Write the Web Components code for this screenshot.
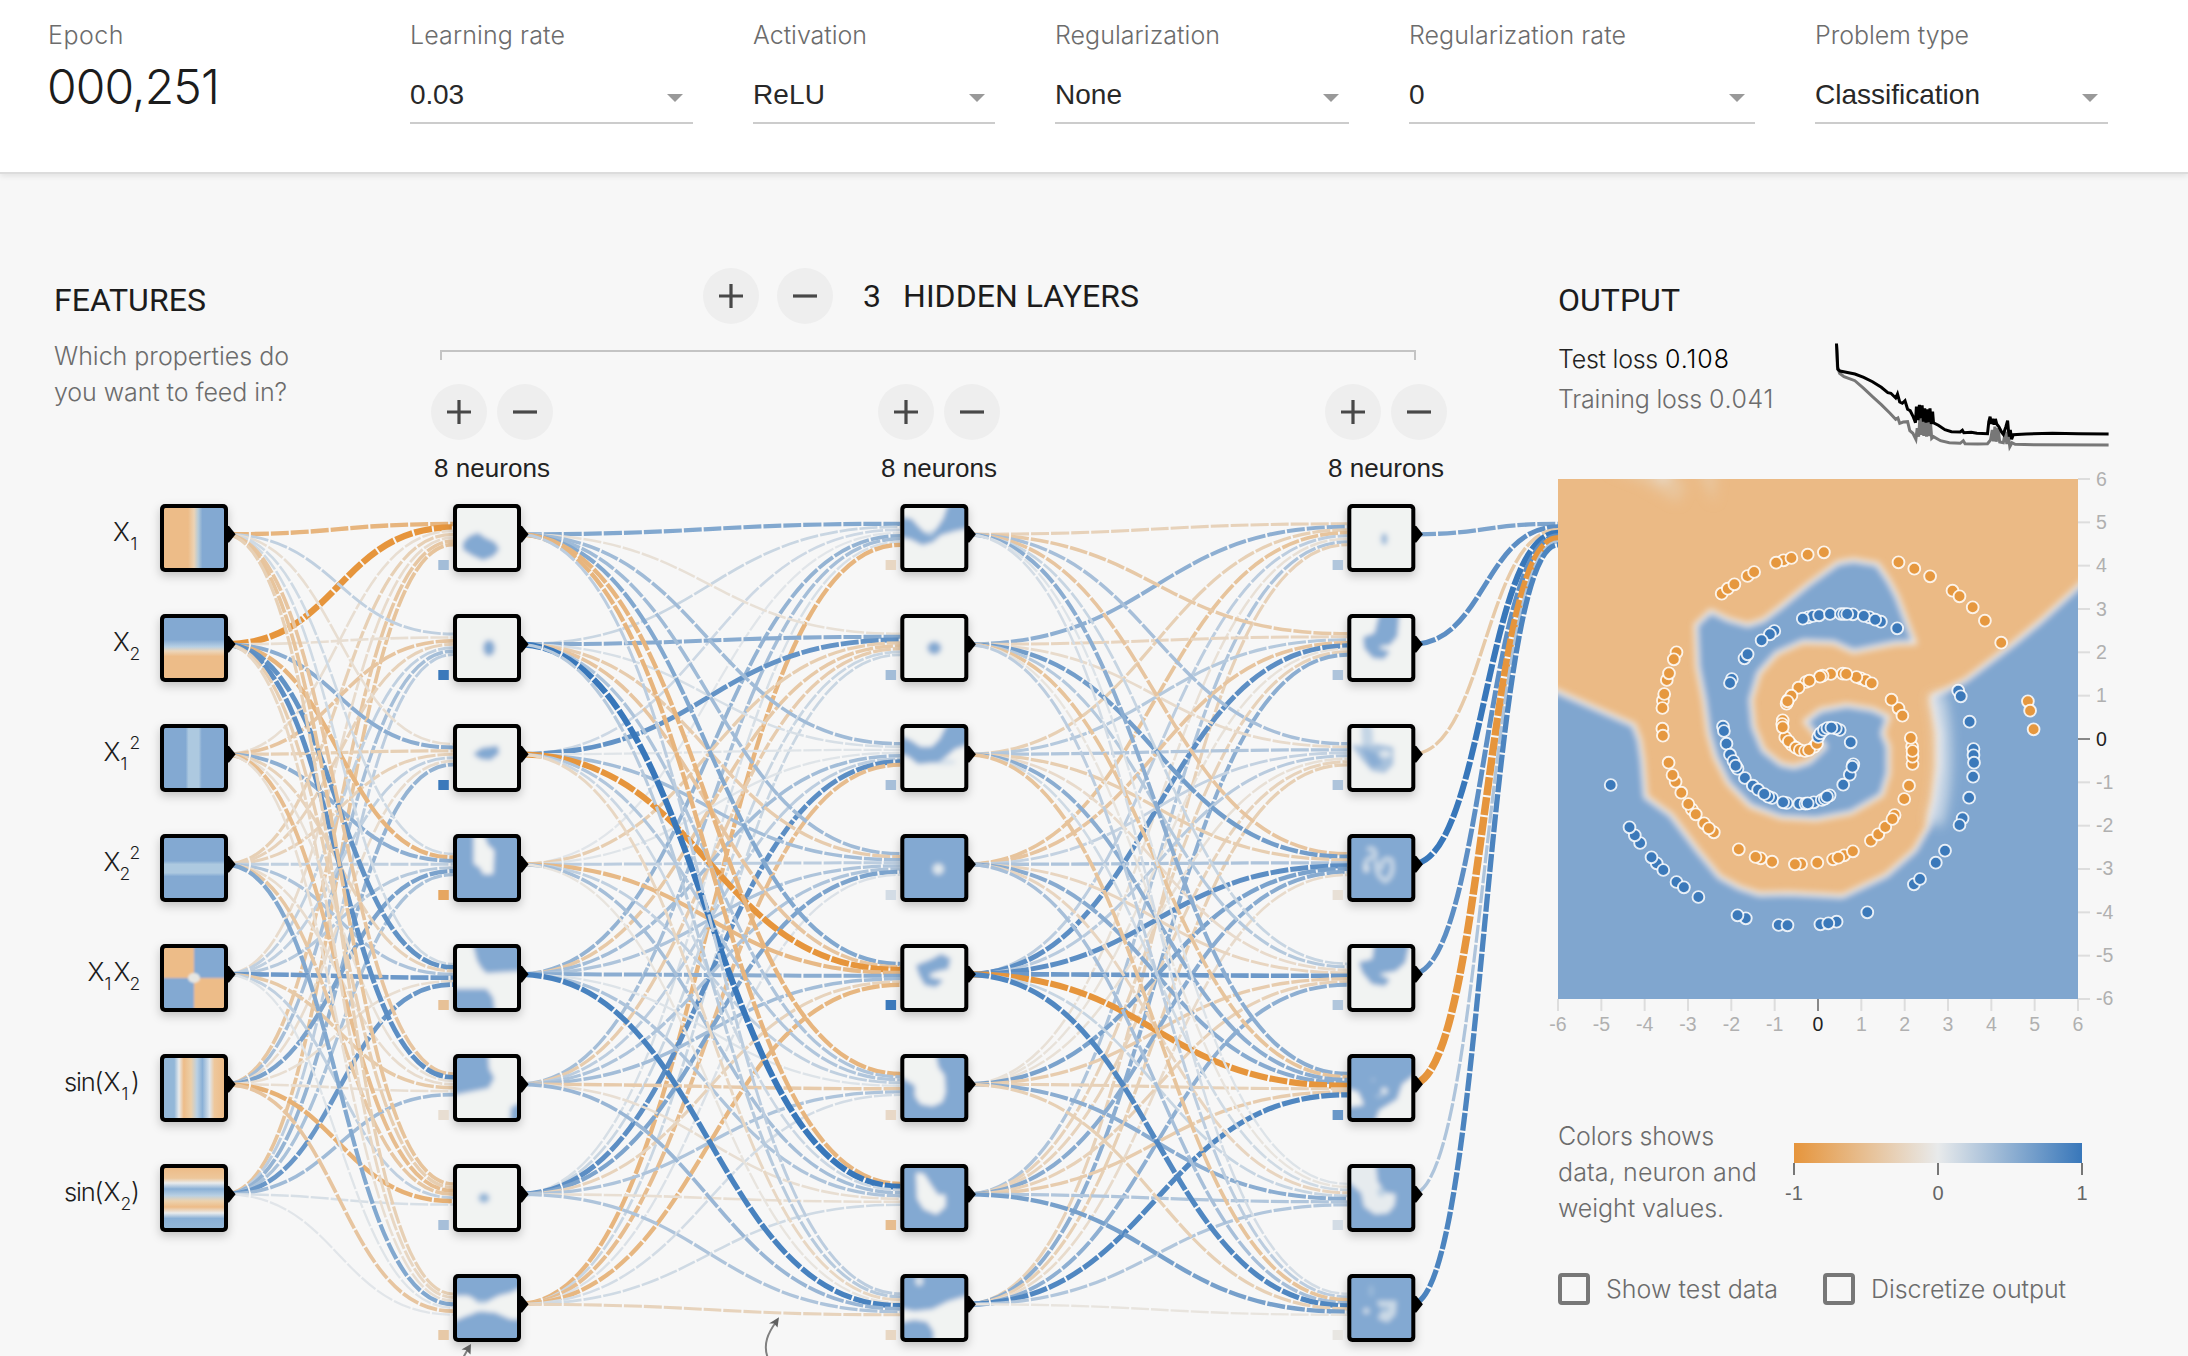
<!DOCTYPE html>
<html lang="en">
<head>
<meta charset="utf-8">
<title>Neural network playground</title>
<style>
html,body{margin:0;height:100%;overflow:hidden}
body{background:#f7f7f7;font-family:Inter,"Liberation Sans",sans-serif;font-weight:300;color:#222}
</style>
</head>
<body>
<play-ground></play-ground>
<script>
const define = (name, html, setup) => customElements.define(name, class extends HTMLElement {
  connectedCallback() {
    if (this.shadowRoot) return;
    this.attachShadow({mode: 'open'}).innerHTML = typeof html === 'function' ? html(this) : html;
    if (setup) setup(this);
  }
});

/* Text spread evenly over a given width */
define('fit-text', el => `<style>:host{display:block;white-space:pre}span{display:inline-block}</style><span>${el.getAttribute('text')}</span>`, el => {
  const s = el.shadowRoot.querySelector('span'), w = +el.getAttribute('w'), n = el.getAttribute('text').length;
  const d = (w - s.getBoundingClientRect().width) / n;
  s.style.letterSpacing = d.toFixed(3) + 'px';
});

define('round-button', el => `<style>
  :host{display:block;width:56px;height:56px;border-radius:50%;background:#eee}
  svg{display:block}
</style><svg width="56" height="56"><path d="M16 28H40${el.hasAttribute('minus') ? '' : 'M28 16V40'}" stroke="#484848" stroke-width="3.2" fill="none"/></svg>`);

define('select-field', el => `<style>
  :host{display:block}
  .l{font-size:25px;line-height:36px;color:#6c6c6c}
  .v{margin-top:24px;padding-bottom:9px;border-bottom:2px solid #ccc;display:flex;justify-content:space-between;align-items:center;
     font:400 28px/36px "Liberation Sans",sans-serif;color:#282828}
  i{width:0;height:0;border:8px solid transparent;border-top-color:#999;border-bottom:0;margin:5px 10px 0 0}
</style><fit-text class="l" text="${el.getAttribute('label')}" w="${el.getAttribute('lw')}"></fit-text>
<div class="v"><fit-text text="${el.getAttribute('value')}" w="${el.getAttribute('vw')}"></fit-text><i></i></div>`);

define('top-controls', `<style>
  :host{display:flex;gap:60px;height:155px;padding:17px 0 0 48px;background:#fff;border-bottom:2px solid #dcdcdc;box-shadow:0 2px 6px rgba(0,0,0,.09);position:relative}
  .e{width:302px}
  .l{font-size:25px;line-height:36px;color:#6c6c6c}
  .n{font-size:48px;line-height:56px;margin:6px 0 0 -1px;color:#1c1c1c}
</style>
<div class="e"><fit-text class="l" text="Epoch" w="76"></fit-text><fit-text class="n" text="000,251" w="172"></fit-text></div>
<select-field style="width:283px" label="Learning rate" lw="155" value="0.03" vw="54"></select-field>
<select-field style="width:242px" label="Activation" lw="114" value="ReLU" vw="72"></select-field>
<select-field style="width:294px" label="Regularization" lw="165" value="None" vw="67"></select-field>
<select-field style="width:346px" label="Regularization rate" lw="217" value="0" vw="15.5"></select-field>
<select-field style="width:293px" label="Problem type" lw="154" value="Classification" vw="165"></select-field>`);

define('layer-controls', `<style>
  :host{display:block;width:122px}
  div{display:flex;justify-content:space-between}
  fit-text{font:400 26px/36px "Liberation Sans",sans-serif;margin:10px 0 0 3px;color:#222}
</style><div><round-button></round-button><round-button minus></round-button></div><fit-text text="8 neurons" w="116"></fit-text>`);

define('features-intro', `<style>
  :host{display:block;padding:106px 0 0 54px;width:431px;flex:none;box-sizing:border-box}
  .h{font:400 32px/40px Roboto,sans-serif;color:#1c1c1c}
  .p{font-size:25px;line-height:36px;color:#6c6c6c}
</style><fit-text class="h" text="FEATURES" w="152"></fit-text>
<fit-text class="p" style="margin-top:18px" text="Which properties do" w="235"></fit-text>
<fit-text class="p" text="you want to feed in?" w="233"></fit-text>`);

define('hidden-layers', `<style>
  :host{display:block;padding-top:94px;width:1016px;flex:none}
  .t{display:flex;align-items:center;padding-left:272px}
  .t round-button+round-button{margin-left:18px}
  .h{font:400 32px/40px Roboto,sans-serif;color:#1c1c1c}
  .b{width:972px;height:8px;border:2px solid #c4c4c4;border-bottom:0;margin:26px 0 0 9px}
  .c{display:flex;justify-content:space-between;margin-top:24px}
</style>
<div class="t"><round-button></round-button><round-button minus></round-button>
<fit-text class="h" style="margin-left:30px" text="3" w="18"></fit-text><fit-text class="h" style="margin-left:22px" text="HIDDEN LAYERS" w="236"></fit-text></div>
<div class="b"></div>
<div class="c"><layer-controls></layer-controls><layer-controls></layer-controls><layer-controls></layer-controls></div>`);

/* Diverging colour scale for weights in [-1, 1] */
const NEG = [230,149,60], MID = [232,234,235], POS = [56,119,186];
const boost = w => Math.pow(Math.abs(w), .92);
const tone = w => {
  const t = Math.min(1, boost(w)), e = w < 0 ? NEG : POS;
  return `rgb(${MID.map((m, i) => Math.round(m + (e[i] - m) * t)).join()})`;
};

/* weights[layer][target][source] */
const W = [[
  [-.6,-1.25,-.12,-.28,-.15,-.38,-.42],
  [.2,-.12,-.4,-.25,.2,.35,.22],
  [-.12,.5,-.28,-.25,.2,-.14,.45],
  [.12,-.6,.48,.2,.25,.6,.32],
  [.12,.75,-.25,.3,.68,-.12,.7],
  [-.4,.78,-.1,-.14,-.35,-.12,.38],
  [-.42,-.3,-.5,-.38,.2,-.65,.08],
  [-.28,-.2,-.12,.55,.04,-.4,.03]],
 [[.55,.15,.13,.03,.45,.35,.08,-.6],
  [-.1,.52,.74,-.3,-.36,-.32,.15,.15],
  [.38,.08,.04,.04,.36,.22,.78,-.5],
  [.38,-.32,.36,.22,.3,.3,.58,.06],
  [.55,-.4,-1.1,-.55,.5,.36,-.24,-.58],
  [-.6,.3,.28,.2,.05,-.34,.3,.1],
  [-.6,1.1,.14,.35,.3,-.12,-.12,.12],
  [.22,.25,-.2,-.06,.9,.42,.3,-.24]],
 [[-.25,.48,-.28,-.42,.22,-.1,.3,-.26],
  [-.36,-.22,.26,-.4,.78,-.08,-.25,.5],
  [.34,-.15,.28,.18,.24,-.1,-.24,-.28],
  [-.4,.65,-.3,.3,.78,.6,.52,-.15],
  [.16,.26,-.16,-.22,.68,-.32,-.26,.48],
  [.5,-.42,.5,.52,-1.15,-.26,-.32,.85],
  [.05,-.06,.12,-.22,.16,.5,.28,.28],
  [.1,.22,-.42,.34,.85,-.28,.62,-.06]],
 [[.58,.78,-.35,1.1,.78,-1.55,.3,.88]]];

const COLX = [160, 453, 900.3, 1347.3], top0 = 504, pitch = 110;
const BIAS = [[], [.36,.98,.98,-.78,-.45,-.12,.34,-.36], [-.2,.36,.34,.1,.98,-.18,-.5,-.2], [.28,.3,.3,-.1,.28,.7,.1,-.04]];
const B = '#83a9d2', N = '#f1f3f2', O = '#edbc88';
const blob = (pts, fill, o = 1) => `<polygon points="${pts}" fill="${fill}" stroke="${fill}" stroke-width="2.5" stroke-linejoin="round" opacity="${o}"/>`;
const ell = (x, y, a, b, f, o = 1) => `<ellipse cx="${x}" cy="${y}" rx="${a}" ry="${b}" fill="${f}" opacity="${o}"/>`;
const bg = f => `<rect x="-9" y="-9" width="78" height="78" fill="${f}"/>`;
const stripes = (id, list, vert) => `<linearGradient id="${id}" x2="${vert ? 0 : 1}" y2="${vert ? 1 : 0}">${list.map(([o, c]) => `<stop offset="${o}" stop-color="${c}"/>`).join('')}</linearGradient><rect width="60" height="60" fill="url(#${id})"/>`;

const ART = [[
  stripes('g0', [[.4,O],[.5,'#ecd3b4'],[.57,'#b5cbd9'],[.64,B]]),
  stripes('g1', [[.36,B],[.48,'#b8d0e4'],[.55,'#ecd6bb'],[.64,O]], 1),
  stripes('g2', [[.36,B],[.41,'#adc9e0'],[.58,'#adc9e0'],[.63,B]]),
  stripes('g3', [[.38,B],[.44,'#adc9e0'],[.58,'#adc9e0'],[.64,B]], 1),
  `<g filter="url(#soft1)">${bg(B)}<rect x="-9" y="-9" width="39" height="39" fill="${O}"/><rect x="30" y="30" width="39" height="39" fill="${O}"/>${ell(30,30,6,5,'#e6e6e2')}</g>`,
  stripes('g5', [[0,'#93b7d8'],[.17,'#93b7d8'],[.25,'#e9ebec'],[.33,O],[.45,'#eccfa8'],[.55,'#b9d0e3'],[.64,'#8ab0d6'],[.76,'#dfe6ec'],[.84,'#eec79b'],[1,O]]),
  stripes('g6', [[0,O],[.17,'#edc79b'],[.25,'#e9ebec'],[.35,'#8ab0d6'],[.46,'#b9d0e3'],[.55,'#ecd2ae'],[.65,O],[.75,'#e9ebec'],[.84,'#8ab0d6'],[1,'#93b7d8']], 1)
],[
  bg(N)+blob('7,35 13,29 21,26 28,31 37,35 41,41 36,47 26,51 15,46 7,41',B),
  bg(N)+ell(32,30,6,8,B),
  bg(N)+blob('18,26 25,21 40,19 41,25 33,31 24,30',B),
  bg(B)+blob('18,-2 26,-2 30,8 36,13 35,35 27,35 24,29 18,25',N),
  bg(N)+blob('17,-4 21,12 25,19 30,24 44,23 64,22 64,-4',B)+blob('-4,42 29,42 35,50 37,64 -4,64',B),
  bg(N)+blob('-4,-4 30,-4 31,11 36,20 31,29 -4,36',B)+blob('55,50 64,46 64,64 54,64',B),
  bg(N)+ell(27,30,5.5,5,B,.85),
  bg(B)+blob('-4,19 11,19 20,24 32,24 42,19 54,16 64,11 64,40 54,40 38,33 20,33 8,37 -4,42',N)+ell(25,36,9,3,B,.7)+ell(25,23,7,3,B,.5)
],[
  bg(N)+blob('-4,10 7,12 14,20 20,26 32,23 40,11 45,-4 64,-4 64,19 50,22 36,26 28,33 18,36 6,30 -4,28',B)+ell(26,23,4,5,N,.5),
  bg(N)+ell(30,30,7,6.5,B),
  bg(N)+blob('-4,9 7,14 16,20 28,20 36,12 44,-4 64,-4 64,15 50,20 42,27 34,33 14,35 4,27 -4,25',B)+ell(40,34,12,3,B,.25),
  bg(B)+ell(34,31,5.5,5.5,N,.85),
  bg(N)+blob('13,18 26,13 37,7 45,11 43,20 33,22 25,25 24,30 37,33 31,38 21,36 16,27',B),
  bg(B)+blob('-4,-4 30,-4 33,10 39,18 40,34 37,43 28,47 17,45 12,38 12,27 -4,17',N),
  bg(B)+blob('13,6 19,7 26,18 33,28 40,28 40,38 32,45 20,40 14,30',N),
  bg(N)+blob('-4,-4 64,-4 64,16 44,22 28,30 10,32 -4,29',B)+blob('-4,46 10,43 22,45 28,54 28,64 -4,64',B)+ell(15,3,4,5,N,.8)
],[
  bg(N)+ell(33,31,3.5,6,B,.75),
  bg(N)+blob('29,-4 47,-4 45,18 38,26 29,27 26,31 37,34 32,40 22,39 14,30 13,20 24,16',B),
  bg(N)+blob('11,-4 20,0 21,14 12,18',B,.4)+blob('2,18 12,19 26,17 41,20 41,36 33,44 21,42 12,32',B,.65)+blob('12,22 24,26 30,36 20,38',B,.8)+ell(34,26,6,3.5,N,.75),
  bg(B)+`<path d="M16 12Q24 8 24 18Q10 22 16 32M25 22Q24 38 34 43Q44 36 40 22Q30 18 30 32" fill="none" stroke="${N}" stroke-width="4.5" opacity=".62"/>${ell(15,31,3,4,N,.6)}`,
  bg(N)+blob('24,-4 57,-4 53,14 44,22 32,24 24,26 37,32 33,37 21,35 12,24 9,15 22,12',B),
  bg(B)+blob('-4,32 6,35 11,46 -4,48',N)+blob('64,18 52,27 47,42 29,53 25,64 64,64',N)+ell(33,33,3.5,3.5,N,.8)+ell(22,22,2,2,N,.3)+ell(28,38,4,1.5,N,.4),
  bg(B)+blob('-4,-4 23,-4 25,14 34,26 43,27 42,37 36,44 24,45 14,38 11,24 -4,11',N,.9)+ell(30,24,4,5,B,.4),
  bg(B)+blob('27,24 44,24 43,36 36,43 28,40 32,32',N,.65)+ell(15,33,3,3,N,.7)+ell(20,13,3,6,N,.2)+ell(33,31,5,2.5,B,.7)
]];

define('network-graph', el => {
  let s = '';
  W.forEach((layer, l) => layer.forEach((ws, t) => ws.forEach((w, i) => {
    const x0 = COLX[l] + 64, y0 = top0 + 30.3 + pitch * i;
    const x1 = l === 3 ? 1558 : COLX[l + 1], y1 = top0 + 30.3 + pitch * t + (i - (ws.length - 1) / 2) / ws.length * 24;
    const m = (x0 + x1) / 2;
    s += `<path d="M${x0} ${y0}C${m} ${y0} ${m} ${y1} ${x1} ${y1}" stroke="${tone(w)}" stroke-width="${(2.1 + 3.6 * boost(w)).toFixed(2)}"/>`;
  })));
  let n = '';
  ART.forEach((col, l) => col.forEach((art, i) => {
    const x = COLX[l], y = top0 + pitch * i;
    n += `<g transform="translate(${x} ${y})"><path d="M67 21.8L69 22L75.6 30.3L69 38.4L67 38.6Z"/><rect width="68" height="68" rx="5" filter="url(#drop)"/>
      <g transform="translate(4 4)" clip-path="url(#inner)"><g ${l ? 'filter="url(#soft)"' : ''}>${art}</g></g></g>`;
    if (l) n += `<rect x="${x - 14.7}" y="${y + 56}" width="10.5" height="10" fill="${tone(BIAS[l][i])}"/>`;
  }));
  const T = (x, y, t, c = '') => `<text x="${x}" y="${y}" class="${c}">${t}</text>`;
  const r = i => 541 + pitch * i;
  const labels = T(113,r(0),'X')+T(130.5,r(0)+8.5,'1','s')+T(113,r(1),'X')+T(129.5,r(1)+8.5,'2','s')
    +[2,3].map(i => T(103.5,r(i),'X')+T(i === 2 ? 120.5 : 119.5,r(i)+8.5,i-1,'s')+T(129.5,r(i)-12.5,'2','s')).join('')
    +T(87.5,r(4),'X')+T(104.5,r(4)+8.5,'1','s')+T(113.5,r(4),'X')+T(129.5,r(4)+8.5,'2','s')
    +[5,6].map(i => `<text x="64" y="${r(i)}" textLength="39.5">sin(</text>`+T(103.5,r(i),'X')+T(i === 5 ? 121.5 : 120.5,r(i)+8.5,i-4,'s')+T(131,r(i),')')).join('');
  return `<style>
    :host{display:block}svg{display:block}
    text{font:300 25.5px Inter,"Liberation Sans",sans-serif;fill:#1c1c1c}
    .s{font-size:17.5px}
    .links path{fill:none;stroke-dasharray:18 2;stroke-dashoffset:-6.67}
  </style><svg width="1558" height="866" viewBox="0 490 1558 866">
  <defs><clipPath id="inner"><rect width="60" height="60" rx="1.5"/></clipPath>
  <filter id="soft" x="-20" y="-20" width="100" height="100" filterUnits="userSpaceOnUse"><feGaussianBlur stdDeviation="2.4"/></filter>
  <filter id="soft1" x="-20" y="-20" width="100" height="100" filterUnits="userSpaceOnUse"><feGaussianBlur stdDeviation="1.2"/></filter>
  <filter id="drop" x="-30%" y="-30%" width="160%" height="170%"><feDropShadow dx="0" dy="4" stdDeviation="5" flood-opacity=".22"/></filter></defs>
  <g class="links">${s}</g>${n}${labels}
  <g fill="none" stroke="#808080" stroke-width="2"><path d="M463.5 1357L468 1349M767.5 1357C763 1344 768 1333 776 1322"/></g>
  <path d="M471 1344L461.5 1349.5L466 1350L470.5 1354.5ZM779 1317.3L769 1323.5L774 1323.5L777.5 1327.5Z" fill="#606060"/>
  </svg>`;
});

define('loss-chart', () => {
  const X = u => ((u - 760) / 2.279).toFixed(1), Y = v => ((v - 300) / 3).toFixed(1);
  const line = p => 'M' + p.map(([u, v]) => X(u) + ' ' + Y(v)).join('L');
  const test = [[768,312],[769,330],[771,388],[776,393],[790,397],[810,402],[830,412],[850,425],[870,442],[885,458],[892,460],[903,474],[907,462],[912,486],[918,490],[924,482],[930,508],[936,512],[942,528],[948,548],[950,500],[954,540],[957,495],[960,535],[963,496],[966,545],[969,505],[972,548],[975,508],[978,546],[981,505],[984,552],[987,515],[989,548],[1000,556],[1015,569],[1030,575],[1050,576],[1055,571],[1058,578],[1075,577],[1088,580],[1112,581],[1115,545],[1118,530],[1121,552],[1124,536],[1127,554],[1130,537],[1133,552],[1138,560],[1144,576],[1148,583],[1154,560],[1158,542],[1161,590],[1164,570],[1167,598],[1171,584],[1200,582],[1260,580],[1320,581],[1388,582]];
  const train = [[768,309],[770,380],[775,400],[785,410],[810,422],[830,445],[850,470],[870,494],[890,520],[903,538],[908,534],[912,550],[920,546],[930,545],[935,572],[942,580],[949,598],[952,565],[955,590],[958,535],[961,585],[964,537],[967,588],[970,540],[973,590],[976,545],[979,588],[982,545],[985,595],[989,590],[1005,602],[1025,608],[1050,610],[1057,602],[1061,611],[1090,612],[1112,611],[1119,600],[1123,570],[1126,604],[1129,560],[1132,605],[1136,565],[1140,606],[1148,608],[1153,575],[1156,612],[1160,590],[1163,620],[1168,608],[1175,613],[1220,614],[1388,615]];
  return `<style>:host{display:block}svg{display:block}path{fill:none;stroke-width:3;stroke-linejoin:miter}</style>
  <svg width="276" height="112"><path d="${line(train)}" stroke="#777"/><path d="${line(test)}" stroke="#000"/></svg>`;
});

define('output-map', () => {
  const o = '505,-19 519,-34 534,-47 564,-72 579,-84 646,-119 629,-112 664,-126 701,-136 738,-143 908,-113 944,-94 980,-71 1031,-28 1047,-11 1077,22 1105,62 1142,128 402,157 396,178 380,240 385,220 371,302 374,282 370,324 370,386 371,407 384,488 400,545 393,525 413,578 437,628 429,612 446,643 465,670 487,697 476,685 544,748 594,775 582,771 620,785 686,792 672,793 723,788 759,778 784,766 771,773 804,754 845,722 862,703 878,681 899,645 894,657 921,597 932,557 940,492 939,440 940,470 940,453 936,414 908,325 917,347 892,299 822,235 833,241 847,250 812,231 781,221 789,222 754,222 735,227 729,230 697,246 705,242 680,263 656,300 653,311 664,287 655,304 644,361 650,412 643,372 644,382 665,435 658,424 674,443 683,450 695,453 716,440 704,450 722,431 1203,304 1208,332 1216,388';
  const b = '625,93 615,103 596,121 557,175 564,163 528,237 524,249 508,380 510,393 516,431 524,464 532,483 541,506 537,497 558,534 576,557 588,569 620,594 611,590 602,582 653,609 645,607 682,611 696,611 715,607 701,610 733,600 751,586 740,596 745,590 782,554 797,524 805,493 803,500 799,427 725,411 730,400 738,390 746,384 774,390 765,385 755,383 702,52 713,48 690,56 727,46 752,42 777,42 804,43 784,42 791,42 842,52 829,48 868,65 855,59 905,85 1044,272 1050,289 1070,365 1079,447 1079,466 1080,488 1078,530 1069,593 1054,655 1047,675 1014,752 993,788 943,853 957,837 837,937 767,965 730,973 748,970 635,975 655,976 560,955 541,946 452,891 402,846 419,862 357,790 372,810 345,772 319,729 307,706 295,682 252,555';
  const dots = (l, f) => l.split(' ').map(p => { const [u, v] = p.split(',').map(Number);
    return `<circle cx="${((u - 132) / 2.279).toFixed(1)}" cy="${(v / 3 + 121).toFixed(1)}" r="5.9" fill="${f}"/>`; }).join('');
  let ax = '';
  for (let k = -6; k <= 6; k++) {
    const p = 260 + k * 43.33, z = k === 0;
    ax += `<path d="M${p} 520V532" stroke="${z ? '#888' : '#ddd'}"/><path d="M520 ${520 - p}H532" stroke="${z ? '#888' : '#ddd'}"/>
      <text x="${p}" y="552" text-anchor="middle"${z ? ' class="z"' : ''}>${k}</text><text x="538" y="${526.5 - p}"${z ? ' class="z"' : ''}>${k}</text>`;
  }
  return `<style>:host{display:block;height:570px}svg{display:block;overflow:visible}
    text{font:400 19.5px "Liberation Sans",sans-serif;fill:#b0b0b0}.z{fill:#222}
    circle{stroke:#fff;stroke-opacity:.85;stroke-width:1.9}
    .r path{fill:#80a6cf;stroke:#efeff0;vector-effect:non-scaling-stroke;stroke-width:4}
  </style><svg width="520" height="520">
  <defs><clipPath id="c"><rect width="520" height="520"/></clipPath><filter id="f" x="-40" y="-40" width="600" height="600" filterUnits="userSpaceOnUse"><feGaussianBlur stdDeviation="3.4"/></filter>
  <filter id="f2" x="-40" y="-40" width="600" height="600" filterUnits="userSpaceOnUse"><feGaussianBlur stdDeviation="6"/></filter></defs>
  <g clip-path="url(#c)"><rect width="520" height="520" fill="#ebba85"/>
  <g filter="url(#f2)" fill="#e8cba6"><path d="M50 -10L85 4L120 24L128 6L112 -10ZM138 -10L156 24L160 -10Z" opacity=".7"/><path d="M92 -8H116L106 5Z" fill="#e9dfd0"/></g>
  <g class="r" filter="url(#f)"><g transform="translate(-57.9 121) scale(.4388 .33333)">
  <path d="M60 235L132 275L305 375L318 420L325 480L332 590L390 645L450 750L500 830L545 862L590 882L660 880L780 888L880 825L945 750L975 680L990 600L1000 500L1000 400L985 290L1060 240L1170 130L1230 65L1317 -40L1400 -140V1290H60Z"/>
  <path d="M480 33L520 58L565 75L600 60L640 20L700 -45L770 -112L805 -120L860 -108L885 -60L905 -10L925 60L945 128L900 130L860 140L805 155L760 128L690 125L630 160L590 220L572 300L578 380L600 450L640 492L670 500L705 485L740 440L722 408L695 365L730 330L790 315L850 328L885 350L872 400L885 440L885 520L870 585L800 638L720 658L640 652L570 618L520 550L490 470L475 400L465 300L450 200L446 75Z"/>
  </g></g>
  <path d="M378 215C388 250 388 310 376 345" fill="none" stroke="#e9edf0" stroke-width="16" opacity=".7" filter="url(#f2)"/>
  </g>
  <g stroke-width="2">${ax}</g>${dots(o, '#e6983f')}${dots(b, '#3b79ba')}</svg>`;
});

define('color-legend', `<style>:host{display:flex;margin-top:69px}
  .t{width:236px;font-size:25px;line-height:36px;color:#6c6c6c}
  svg{display:block;overflow:visible;margin-top:25px}
  text{font:400 20px "Liberation Sans",sans-serif;fill:#666;text-anchor:middle}
</style><div class="t"><fit-text text="Colors shows" w="156"></fit-text><fit-text text="data, neuron and" w="199"></fit-text><fit-text text="weight values." w="166"></fit-text></div>
<svg width="288" height="60"><defs><linearGradient id="g"><stop offset="0" stop-color="#e6953c"/><stop offset=".5" stop-color="#e8eaeb"/><stop offset="1" stop-color="#3877ba"/></linearGradient></defs>
<rect width="288" height="20" fill="url(#g)"/><path d="M0 20V32M144 20V32M288 20V32" stroke="#777" stroke-width="2"/>
<text x="0" y="57">-1</text><text x="144" y="57">0</text><text x="288" y="57">1</text></svg>`);

define('check-box', el => `<style>:host{display:flex;align-items:center;gap:16px}
  i{width:24px;height:24px;border:4px solid #777;border-radius:4px}
  fit-text{font-size:25px;line-height:36px;color:#6c6c6c}
</style><i></i><fit-text text="${el.getAttribute('label')}" w="${el.getAttribute('w')}"></fit-text>`);

define('output-panel', `<style>
  :host{display:block;padding-top:106px;width:560px}
  .h{font:400 32px/40px Roboto,sans-serif;color:#1c1c1c}
  .s{display:flex;justify-content:space-between;height:117px;margin-top:19px;padding-right:9px;margin-bottom:23px}
  .m{font-size:25px;line-height:40px}
  .m div{display:flex;gap:7px}
  .m div+div{color:#6c6c6c}
  loss-chart{margin-top:1px}
  .c{display:flex;gap:44px;margin-top:45px}
</style>
<fit-text class="h" text="OUTPUT" w="122"></fit-text>
<div class="s"><div class="m"><div><fit-text text="Test loss" w="100"></fit-text><fit-text style="color:#000" text="0.108" w="65"></fit-text></div><div><fit-text text="Training loss" w="144"></fit-text><fit-text text="0.041" w="65"></fit-text></div></div><loss-chart></loss-chart></div>
<output-map></output-map><color-legend></color-legend>
<div class="c"><check-box label="Show test data" w="172"></check-box><check-box style="margin-left:1px" label="Discretize output" w="195"></check-box></div>`);

define('play-ground', `<style>
  :host{display:block;width:2188px;height:1356px;overflow:hidden}
  main{display:flex}
  .left{width:1558px;flex:none}
  .top{display:flex;height:316px}
</style><top-controls></top-controls>
<main><div class="left"><div class="top"><features-intro></features-intro><hidden-layers></hidden-layers></div><network-graph></network-graph></div><output-panel></output-panel></main>`);
</script>
</body>
</html>
